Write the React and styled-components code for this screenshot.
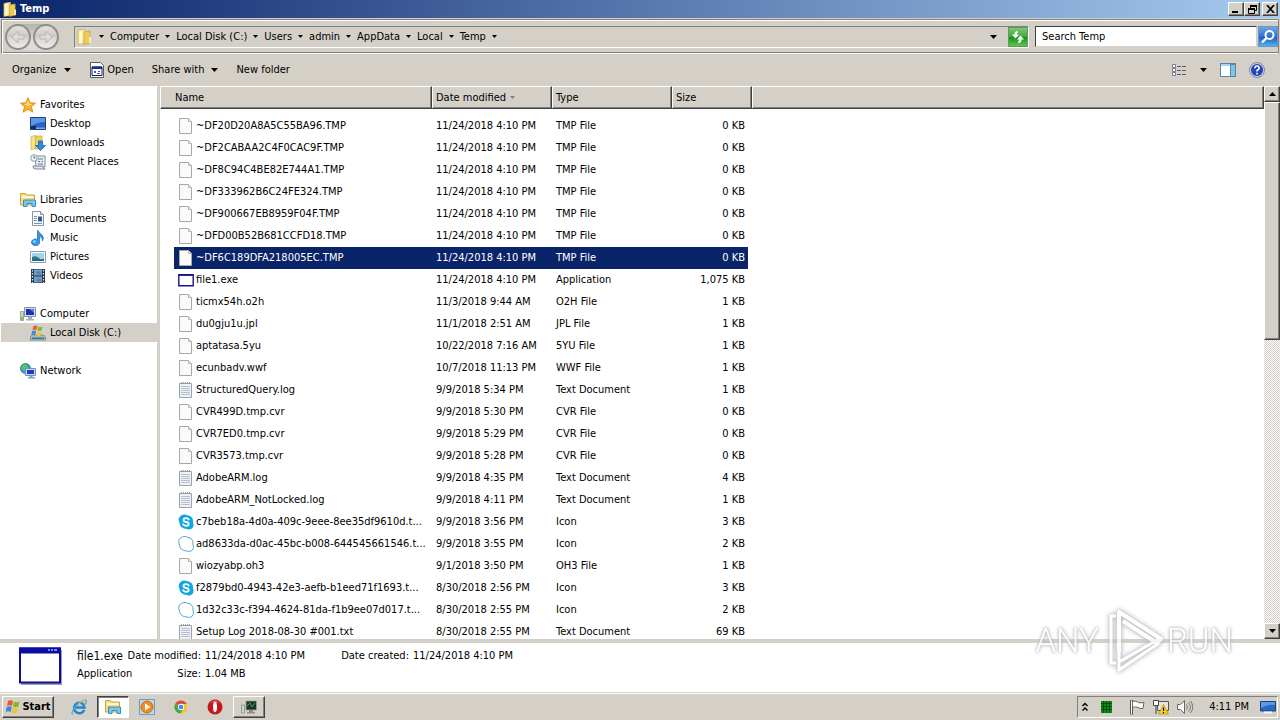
import React, { useState } from 'react';
import styled, { createGlobalStyle } from 'styled-components';

const GlobalStyle = createGlobalStyle`
  * { box-sizing: border-box; }
  body {
    margin: 0;
    overflow: hidden;
    font: 11px/18px "DejaVu Sans Condensed", "DejaVu Sans", sans-serif;
    color: #000;
  }
  button, input {
    font: inherit;
    color: inherit;
    padding: 0;
    border: 0;
    background: none;
  }
  svg { display: block; flex: none; }
`;

const Desktop = styled.div`
  position: relative;
  display: flex;
  flex-direction: column;
  height: 100vh;
  background: #d4d0c8;
`;

/* title bar */

const TitleBar = styled.header`
  display: flex;
  align-items: center;
  gap: 3px;
  height: 18px;
  padding: 0 2px;
  background: linear-gradient(to right, #0a246a, #a6caf0);
`;

const Title = styled.h1`
  flex: 1;
  margin: 0;
  font-size: 11px;
  line-height: 18px;
  color: #fff;
`;

const WindowButtons = styled.div`
  display: flex;
  button:last-child { margin-left: 2px; }
`;

const RaisedButton = styled.button`
  display: flex;
  align-items: center;
  justify-content: center;
  width: 16px;
  height: 14px;
  background: #d4d0c8;
  border: 1px solid;
  border-color: #fff #404040 #404040 #fff;
  box-shadow: inset -1px -1px 0 #808080;
`;

/* address row */

const AddressBand = styled.div`
  display: flex;
  align-items: center;
  gap: 6px;
  height: 35px;
  margin: 1px 1px 0;
  padding: 0 0 0 3px;
  border: 1px solid #808080;
  border-bottom-color: #fff;
  box-shadow: inset 1px 1px 0 #fff, inset 0 -1px 0 #808080;
`;

const NavButtons = styled.div`
  display: flex;
  gap: 2px;
  margin-right: 9px;
  border-radius: 13px;
  background: linear-gradient(#b4b2ae, #dedcd8 60%);
`;

const RoundButton = styled.button`
  display: flex;
  align-items: center;
  justify-content: center;
  width: 26px;
  height: 26px;
  border: 2px solid #908e8a;
  border-radius: 50%;
  background: linear-gradient(#e4e3e0, #c9c7c3 50%, #d6d4d0 52%, #eeedea);
`;

const AddressBox = styled.div`
  flex: 1;
  display: flex;
  align-items: center;
  height: 22px;
  padding-left: 1px;
  border: 1px solid;
  border-color: #808080 #fff #fff #808080;
`;

const Crumbs = styled.nav`
  flex: 1;
  display: flex;
  align-items: center;
  gap: 6px;
  padding-left: 7px;
  a { color: inherit; text-decoration: none; }
`;

const RefreshButton = styled.button`
  display: flex;
  align-items: center;
  justify-content: center;
  width: 20px;
  height: 20px;
  margin-left: 11px;
  border: 1px solid #5f9b5a;
  background: linear-gradient(#7cc678, #3fa83a 50%, #1c8f19 52%, #5cc653);
`;

const SearchBox = styled.form`
  display: flex;
  gap: 1px;
  width: 243px;
`;

const SearchInput = styled.input`
  flex: 1;
  min-width: 0;
  height: 21px;
  padding-left: 6px;
  background: #fff;
  border: 1px solid;
  border-color: #404040 #d4d0c8 #d4d0c8 #404040;
  outline: none;
`;

const SearchButton = styled.button`
  display: flex;
  align-items: center;
  justify-content: center;
  width: 20px;
  height: 21px;
  border: 1px solid #6f95c4;
  background: linear-gradient(#6fa6e6, #2f6fd0 50%, #1c59c2 52%, #4bb4ee);
`;

/* command bar */

const CommandBar = styled.div`
  display: flex;
  align-items: center;
  justify-content: space-between;
  height: 32px;
  padding: 0 15px 0 12px;
`;

const Commands = styled.div`
  display: flex;
  align-items: center;
  gap: ${props => props.$gap}px;
`;

const Command = styled.button`
  display: flex;
  align-items: center;
  gap: ${props => props.$gap || 8}px;
`;

/* panes */

const Main = styled.main`
  flex: 1;
  display: flex;
  min-height: 0;
`;

const Sidebar = styled.nav`
  width: 160px;
  padding-top: 9px;
  padding-left: 1px;
  background: #fff;
  border-right: 3px solid #d4d0c8;
`;

const Group = styled.div`
  margin-bottom: 19px;
`;

const SideLink = styled.a`
  display: flex;
  align-items: center;
  gap: 4px;
  height: 19px;
  padding-left: ${props => props.$child ? 29 : 19}px;
  background: ${props => props.$selected ? '#d4d0c8' : 'transparent'};
  color: inherit;
  text-decoration: none;
`;

const FilePane = styled.section`
  flex: 1;
  min-width: 0;
  overflow: hidden;
  background: #fff;
`;

const FileTable = styled.table`
  display: block;
  thead, tbody { display: block; }
`;

const HeadRow = styled.tr`
  display: grid;
  grid-template-columns: 272px 120px 120px 80px 1fr;
  height: 23px;
  margin-bottom: 6px;
  background: #d4d0c8;
`;

const HeadCell = styled.th`
  display: flex;
  align-items: center;
  gap: 4px;
  padding: 0 0 0 ${props => props.$first ? 14 : 4}px;
  font-weight: normal;
  border: 1px solid;
  border-color: #fff #404040 #404040 #fff;
  border-left-width: ${props => props.$first ? 1 : 0}px;
  box-shadow: inset ${props => props.$first ? 0 : 1}px 0 0 #fff, inset -1px -1px 0 #808080;
`;

const FileRow = styled.tr`
  display: grid;
  grid-template-columns: 258px 120px 120px 76px;
  width: 574px;
  height: 22px;
  margin-left: 14px;
  line-height: 22px;
  background: ${props => props.$selected ? '#0a246a' : 'transparent'};
  color: ${props => props.$selected ? '#fff' : '#000'};
`;

const Cell = styled.td`
  padding: 0 3px 0 4px;
  text-align: ${props => props.$right ? 'right' : 'left'};
  white-space: nowrap;
`;

const NameCell = styled(Cell)`
  display: flex;
  align-items: center;
  gap: 2px;
`;

const ScrollBar = styled.div`
  display: flex;
  flex-direction: column;
  width: 16px;
  background: repeating-conic-gradient(#fff 0 25%, #d4d0c8 0 50%) 0 0 / 2px 2px;
`;

const ScrollButton = styled(RaisedButton)`
  height: 16px;
  flex: none;
`;

const Thumb = styled(ScrollButton)`
  height: 43%;
  margin-bottom: auto;
`;

/* details pane */

const Details = styled.section`
  display: flex;
  height: 53px;
  padding: 4px 0 0 18px;
  gap: 15px;
  border-top: 4px solid #d4d0c8;
  background: #fff;
`;

const Facts = styled.dl`
  display: grid;
  grid-template-columns: 50px 78px 132px 76px auto;
  grid-auto-rows: 18px;
  margin: 0;
  white-space: nowrap;
  dt, dd { margin: 0; }
  dt { text-align: right; padding-right: 4px; }
`;

const FileName = styled.dd`
  font-size: 12px;
`;

/* taskbar */

const Taskbar = styled.footer`
  display: flex;
  align-items: center;
  height: 28px;
  padding: 2px 2px 0;
  box-shadow: inset 0 1px 0 #d4d0c8, inset 0 2px 0 #fff;
`;

const StartButton = styled(RaisedButton)`
  width: 52px;
  height: 22px;
  gap: 1px;
  margin-right: 9px;
  font-weight: bold;
`;

const Apps = styled.div`
  display: flex;
  flex: 1;
  gap: 2px;
`;

const AppButton = styled.button`
  display: flex;
  align-items: center;
  justify-content: center;
  width: 32px;
  height: 22px;
  border: 1px solid transparent;
  ${props => props.$state === 'active' && `
    background: #fff;
    border-color: #404040 #fff #fff #404040;
    box-shadow: inset 1px 1px 0 #808080;
  `}
  ${props => props.$state === 'open' && `
    border-color: #fff #404040 #404040 #fff;
    box-shadow: inset -1px -1px 0 #808080;
  `}
`;

const Tray = styled.div`
  display: flex;
  align-items: center;
  gap: 8px;
  height: 22px;
  padding: 0 1px 0 3px;
  border: 1px solid;
  border-color: #808080 #fff #fff #808080;
`;

const TrayItem = styled.button`
  display: flex;
  margin: 0 ${props => props.$after || 0}px 0 0;
`;

const Clock = styled.time`
  margin: 0 3px 0 8px;
`;

const Watermark = styled.div`
  position: absolute;
  right: 47px;
  bottom: 46px;
  display: flex;
  align-items: center;
  gap: 4px;
  font: 300 33px/66px Roboto, sans-serif;
  color: #fff;
  opacity: 0.8;
  text-shadow: 0 0 3px #aaa, 0 0 3px #bbb, 0 0 5px #ccc;
  pointer-events: none;
  svg { filter: drop-shadow(0 0 2px #aaa) drop-shadow(0 0 2px #ccc); }
`;

/* icons */

const Caret = ({ w = 7, up, fill = '#000' }) => {
  const h = (w + 1) / 2;
  return (
    <svg width={w} height={h} viewBox={`0 0 ${w} ${h}`}>
      <path d={up ? `M0 ${h}H${w}L${w / 2} 0Z` : `M0 0H${w}L${w / 2} ${h}Z`} fill={fill} />
    </svg>
  );
};

const Svg = ({ children, s = 16 }) => <svg width={s} height={s} viewBox="0 0 16 16">{children}</svg>;

const FolderUpright = ({ s }) => (
  <Svg s={s}>
    <path d="M2 1.500L9 0V14.500L2 15.500Z" fill="#f7e695" stroke="#c9a83c" strokeWidth=".6" />
    <path d="M8 3L14 2V14L8 15.500Z" fill="#eccb58" stroke="#c09a32" strokeWidth=".6" />
    <path d="M3.500 2L6 1.600V14L3.500 14.500Z" fill="#fff8cf" />
    <path d="M13 8h2v6h-2z" fill="#f9ecaf" />
  </Svg>
);

const NavArrow = ({ back }) => (
  <svg width="16" height="16" viewBox="0 0 16 16">
    <path d={back ? 'M8 2L2 8l6 6v-4h6V6H8z' : 'M8 2l6 6-6 6v-4H2V6h6z'} fill="#dddbd7" stroke="#b8b6b2" strokeWidth="1" />
  </svg>
);

const Star = () => (
  <Svg>
    <path d="M8 .8l2.100 5 5.400.4-4.100 3.500 1.400 5.400L8 12.200l-4.800 2.900 1.400-5.400L.5 6.200l5.400-.4z" fill="#fbb12a" stroke="#e08410" strokeWidth=".9" />
    <path d="M8 3l1.300 3.700 3.600.3L8 9 4 7l2.700-.3z" fill="#ffe27a" />
  </Svg>
);

const DesktopIcon = () => (
  <Svg>
    <path d="M.5 1.500h15v12H.5z" fill="#2a62c8" stroke="#1e3f86" />
    <path d="M1 2h14v4Q8 6 1 10z" fill="#5d97e6" />
    <path d="M1 10h5v3H1z" fill="#1b2f55" />
    <path d="M6 11.500h9V13H6z" fill="#7aa9dd" />
  </Svg>
);

const Downloads = () => (
  <Svg>
    <path d="M1 1.500l5-1v13l-5 1z" fill="#f7e58b" stroke="#d0ad43" strokeWidth=".7" />
    <path d="M6 1h6v13H5z" fill="#f0d266" stroke="#c9a23a" strokeWidth=".7" />
    <path d="M8.500 6h4v4.500h3l-5 5-5-5h3z" fill="#2e8be0" stroke="#1a5fae" strokeWidth=".8" />
  </Svg>
);

const Recent = () => (
  <Svg>
    <path d="M5 2h10v11H6z" fill="#e8edf2" stroke="#7d8a99" />
    <path d="M8 5h5M8 7.500h2M11.500 7.500H13M8 10h5" stroke="#5c7fa8" />
    <path d="M3 12h10q0 3 2 3H5q-2 0-2-3z" fill="#dde4ea" stroke="#7d8a99" />
    <circle cx="4" cy="4" r="3.300" fill="#f4f7fa" stroke="#8798aa" />
    <path d="M4 2v2h1.500" stroke="#345" fill="none" strokeWidth=".8" />
  </Svg>
);

const LibrariesIcon = () => (
  <Svg>
    <path d="M.5 1.500h5l1 1.500h8v10H.5z" fill="#f6df83" stroke="#c8a441" />
    <path d="M1.500 4h12v2h-12z" fill="#fff6c8" />
    <path d="M3.500 14.500V8h12v6.500h-3.500v-3h-5v3z" fill="#7ec5ea" stroke="#3a8dbf" />
  </Svg>
);

const DocumentsIcon = () => (
  <Svg>
    <path d="M2.500.5h8l3 3v11h-11z" fill="#fdfdfe" stroke="#8593a5" />
    <path d="M10.500.5v3h3" fill="#d7e0ea" stroke="#8593a5" />
    <path d="M4 5.500h3M4 7.500h3M4 9.500h3M4 12.500h8" stroke="#7390b5" />
    <path d="M8 5.500h4v5H8z" fill="#2f5d9c" />
  </Svg>
);

const MusicIcon = () => (
  <Svg>
    <path d="M8 .5q1 2.500 4 4.500 2.500 3 .5 6 .5-3.500-3-4.500V12a4 3.400 0 1 1-2-2.600V.5z" fill="#2d9be6" stroke="#1668b0" strokeWidth=".7" />
    <circle cx="4.500" cy="11.500" r="1.300" fill="#9ad6fb" />
  </Svg>
);

const PicturesIcon = () => (
  <Svg>
    <path d="M.5 2.500h15v11H.5z" fill="#fff" stroke="#8a9bac" />
    <path d="M2 4h12v8H2z" fill="#9fd4f2" />
    <path d="M2 8q4-2 7 1t5 0v3H2z" fill="#2d7b72" />
    <path d="M2 10.500h12V12H2z" fill="#2a5f9e" />
  </Svg>
);

const VideosIcon = () => (
  <Svg>
    <path d="M1 1h14v14H1z" fill="#2b3540" />
    <path d="M4 1.500h8v6H4z" fill="#5aa8dc" />
    <path d="M4 8.500h8v6H4z" fill="#5aa8dc" />
    <path d="M6 4l3-1 2 2v1.500H7zM6 12l3-2 2 2v1.500H7z" fill="#a8463a" opacity=".5" />
    <path d="M2.500 2v13M13.500 2v13" stroke="#e6ebef" strokeWidth="1.200" strokeDasharray="1.500 1.500" />
  </Svg>
);

const ComputerIcon = () => (
  <Svg>
    <path d="M.5 5.500h3v9h-3z" fill="#cdd5d0" stroke="#8a948e" strokeWidth=".8" />
    <path d="M1 11h2v3H1z" fill="#7fc24c" />
    <path d="M4.500 1.500h11v9h-11z" fill="#d6dbe6" stroke="#8b93a8" />
    <path d="M6 3h8v6H6z" fill="#1c2fb0" />
    <path d="M9 3h5v4z" fill="#5b78e8" />
    <path d="M8 11h4v2h2v1.500H6V13h2z" fill="#a8aebb" />
  </Svg>
);

const DiskIcon = () => (
  <Svg>
    <path d="M2 10h11l2.500 2v3H.5v-3z" fill="#a9bcc3" stroke="#6d8088" strokeWidth=".8" />
    <path d="M2 12.500h12V14H2z" fill="#2f7f8a" />
    <path d="M3.500 1q2-1 4 0L6.500 5q-2-1-4 0z" fill="#ea5a22" />
    <path d="M8.500 1.500q2 1 4 0l-1 4q-2 1-4 0z" fill="#7fba2c" />
    <path d="M2.200 6q2-1 4 0l-1 4q-2-1-4 0z" fill="#3d86dd" />
    <path d="M7.200 6.500q2 1 4 0l-1 4q-2 1-4 0z" fill="#f8c22c" />
  </Svg>
);

const NetworkIcon = () => (
  <Svg>
    <circle cx="5.500" cy="5.500" r="5" fill="#3ba5c9" stroke="#1c6f94" strokeWidth=".8" />
    <path d="M2 2.500Q6 0 7 2.500T3 7Q1 6 2 2.500zM4 8q3-1 3 2z" fill="#5fc05a" />
    <path d="M5.500 5.500h10v7h-10z" fill="#cbd6ee" stroke="#7c8fb8" />
    <path d="M7 7h7v4H7z" fill="#1a3ec4" />
    <path d="M9.500 13h3v1H15v1.500H8V14h1.500z" fill="#8aa0c4" />
  </Svg>
);

const BlankFile = () => (
  <Svg>
    <path d="M1.500.5h9l3 3v12h-12z" fill="#fafafa" stroke="#a8a8a8" />
    <path d="M10.500.5v3h3" fill="#e4e4e4" stroke="#b8b8b8" />
  </Svg>
);

const TextFile = () => (
  <Svg>
    <path d="M1.500 1.500h12v14h-12z" fill="#eef2f6" stroke="#9aa3ac" />
    <path d="M3 4.500h9M3 6.500h9M3 8.500h9M3 10.500h9M3 12.500h9" stroke="#b4c1ce" />
    <path d="M3 1h10" stroke="#8a8a8a" strokeWidth="1.600" strokeDasharray="1 1" />
  </Svg>
);

const ExeFile = () => (
  <Svg>
    <path d="M.8 2.800h14.400v11H.8z" fill="#fff" stroke="#14148c" strokeWidth="1.400" />
    <path d="M1 3h14" stroke="#14148c" strokeWidth="1.600" />
  </Svg>
);

const blob = 'M4.500.8Q7-.2 9.500 1.200 15.500 2 15 8.500 16.500 12 14 14.500 11.500 16.300 9 15 2 15 1.200 8-.8 3.500 4.500.8z';

const SkypeIcon = () => (
  <Svg>
    <path d={blob} fill="#12a5e4" />
    <path d="M10.800 5.600Q9.800 4.200 8 4.200 5.500 4.200 5.500 6T8 8t2.700 2T8 11.800Q5.800 11.800 5 10.200" fill="none" stroke="#fff" strokeWidth="1.800" strokeLinecap="round" />
  </Svg>
);

const SkypeOutline = () => (
  <Svg><path d={blob} fill="#fff" stroke="#3f9fd0" strokeWidth=".9" /></Svg>
);

const OpenIcon = () => (
  <Svg>
    <path d="M1.500.5h10l3 3v12h-13z" fill="#fff" stroke="#5a5a5a" />
    <path d="M3 5h10v8.500H3z" fill="#fff" stroke="#14145c" />
    <path d="M3 4.500h10v2.500H3z" fill="#1b2a9c" />
    <path d="M5 9h2v2H5zM9 9h2v1H9zM8 11h3v1H8z" fill="#2a5fb8" />
  </Svg>
);

const ViewIcon = () => (
  <Svg>
    <path d="M1.500 2.500h3v3h-3zM1.500 6.500h3v3h-3zM1.500 10.500h3v3h-3z" fill="#fff" stroke="#777c86" />
    <path d="M6 4.500h4M11 4.500h4M6 8.500h4M11 8.500h4M6 12.500h4M11 12.500h4" stroke="#5b6068" />
  </Svg>
);

const PreviewIcon = () => (
  <Svg>
    <path d="M.5 1.500h15v13H.5z" fill="#fff" stroke="#4e86a8" />
    <path d="M1 2h14v2H1z" fill="#a9d3e8" />
    <path d="M10.500 2.500h5v12h-5z" fill="#86c3e0" stroke="#4e86a8" />
  </Svg>
);

const HelpIcon = () => (
  <Svg>
    <circle cx="8" cy="8" r="7.500" fill="#c7cfe4" stroke="#7d88a8" />
    <circle cx="8" cy="8" r="6" fill="#2447b4" />
    <path d="M5.800 6.200Q6 4 8 4t2.200 2Q10.200 7.200 8 8.500v1" fill="none" stroke="#fff" strokeWidth="1.600" />
    <path d="M7.200 10.800h1.600v1.600H7.200z" fill="#fff" />
  </Svg>
);

const RefreshIcon = () => (
  <Svg>
    <path d="M7.500 2Q4.500 2 4.500 5.500H2l3.500 4 3.500-4H6.800Q6.800 4 8 3.500z" fill="#fff" />
    <path d="M8.500 14q3 0 3-3.500H14l-3.500-4-3.500 4h2.200Q9.200 12 8 12.500z" fill="#fff" />
  </Svg>
);

const MagnifierIcon = () => (
  <Svg>
    <circle cx="9.500" cy="6" r="4" fill="none" stroke="#fff" strokeWidth="2" />
    <path d="M6.500 9L2 13.500" stroke="#fff" strokeWidth="2.400" />
  </Svg>
);

const BigWindow = () => (
  <svg width="44" height="40" viewBox="0 0 44 40">
    <path d="M3 3h41v35H3z" fill="#9a9ab4" />
    <path d="M2 1.500h40v34H2z" fill="#fff" stroke="#10108c" strokeWidth="2" />
    <path d="M1 .5h42v6H1z" fill="#0c0ca4" />
    <path d="M30 3h2M33 3h2M36 3h3" stroke="#7fc4f2" strokeWidth="1.500" />
  </svg>
);

const WindowsFlag = () => (
  <Svg>
    <path d="M3 2q2.500-1.500 5 0L7 7Q4.500 5.500 2 7z" fill="#ea5a22" />
    <path d="M9 2.500q2.500 1.500 5.500 0l-1 5q-3 1.500-5.500 0z" fill="#7fba2c" />
    <path d="M1.700 8q2.500-1.500 5 0l-1 5Q3.200 11.500.7 13z" fill="#3d86dd" />
    <path d="M7.800 8.500q2.500 1.500 5.500 0l-1 5q-3 1.500-5.500 0z" fill="#f8c22c" />
  </Svg>
);

const IeIcon = () => (
  <Svg>
    <path d="M13.300 10.800A5.300 5.300 0 1 1 13.600 8.500H4" fill="none" stroke="#2383cf" strokeWidth="2.400" />
    <path d="M2 15.300Q-1 14 5 7.500T14.500 1Q16.500 2 14 5.500" fill="none" stroke="#4fa8e4" strokeWidth="1.300" />
    <path d="M7 5.500Q12 .8 14.500 1.200" fill="none" stroke="#e5b82c" strokeWidth="1.300" />
  </Svg>
);

const PlayIcon = () => (
  <Svg>
    <path d="M.5.500h15v15H.5z" fill="#b9dcf3" stroke="#5d9fd0" />
    <circle cx="8" cy="8" r="6" fill="#f58a1c" stroke="#d46a08" />
    <path d="M6 4.500v7L11.500 8z" fill="#fff" />
  </Svg>
);

const ChromeIcon = () => (
  <Svg s={14}>
    <circle cx="8" cy="8" r="7.500" fill="#f4c430" />
    <path d="M8 8L1.500 4.200A7.500 7.500 0 0 1 14.500 4.500H8z" fill="#dd4b3e" />
    <path d="M8 8L1.500 4.200A7.500 7.500 0 0 0 7.500 15.500L11 9.500z" fill="#3fa652" />
    <circle cx="8" cy="8" r="3.600" fill="#fff" />
    <circle cx="8" cy="8" r="2.700" fill="#4a86e8" />
  </Svg>
);

const OperaIcon = () => (
  <Svg>
    <circle cx="8" cy="8" r="7.500" fill="#c8161c" />
    <path d="M3 4q5-5 10 0-5-2-10 0z" fill="#ef6a6c" />
    <ellipse cx="8" cy="8" rx="2" ry="5.200" fill="#fff" />
  </Svg>
);

const MonitorIcon = () => (
  <Svg>
    <path d="M5 2h10.500v9H5z" fill="#20352a" stroke="#9aa3a0" strokeWidth=".8" />
    <path d="M6 7l3-3 2 4 3-4" fill="none" stroke="#2fa84a" />
    <path d="M8 11h4v2h2v1.500H6V13h2z" fill="#8b908e" />
    <path d="M.5 6h3v8h-3z" fill="#cfd4d0" stroke="#858a86" strokeWidth=".8" />
  </Svg>
);

const ChevronsUp = () => (
  <svg width="8" height="10" viewBox="0 0 8 10">
    <path d="M1.500 4L4 1.500 6.500 4M1.500 8.500L4 6l2.500 2.500" fill="none" stroke="#000" strokeWidth="1.400" />
  </svg>
);

const GreenGrid = () => (
  <svg width="12" height="12" viewBox="0 0 12 12">
    <path d="M0 0h11v12H0z" fill="#0b8a14" />
    <path d="M0 2.500h11M0 5.500h11M0 8.500h11M2.500 0v12M5.500 0v12M8.500 0v12" stroke="#04460a" strokeWidth=".8" />
  </svg>
);

const FlagIcon = () => (
  <Svg>
    <path d="M2.500 1v14.500" stroke="#555" strokeWidth="3" />
    <path d="M3.500 2.500q3-1 5 .5t6.500.5l-1 6q-3 .5-5-1t-5.500 0z" fill="#fff" stroke="#666" />
    <path d="M2.500 1.500V15" stroke="#fff" />
  </Svg>
);

const NetTray = () => (
  <Svg>
    <path d="M4.500 2.500h11v9h-11z" fill="#e6e4de" stroke="#555" />
    <path d="M.5 1.500h5v5h-5zM3 7v8" fill="#fff" stroke="#444" />
    <path d="M10.500 5.500l5 9.500h-10z" fill="#ffd21e" stroke="#b08d00" strokeWidth=".7" />
    <path d="M10.500 8.500v3.500M10.500 13v1.200" stroke="#000" strokeWidth="1.200" />
  </Svg>
);

const Speaker = () => (
  <Svg>
    <path d="M.5 5.500h3L7.500 1.500v13l-4-4h-3z" fill="#fff" stroke="#666" />
    <path d="M9.500 5.500q2 2.500 0 5M11.500 3.500q4 4.500 0 9M13.500 2q4.500 6 0 12" fill="none" stroke="#777" />
  </Svg>
);

const ShowDesktop = () => (
  <Svg>
    <path d="M.5 2.500h15v9.500H.5z" fill="#2a68c8" stroke="#1c3e7c" />
    <path d="M1 3h14v3Q8 5 1 9z" fill="#5c9be8" />
    <path d="M4 13.500h8" stroke="#f4f4f4" strokeWidth="2" />
  </Svg>
);

/* data */

const crumbs = ['Computer', 'Local Disk (C:)', 'Users', 'admin', 'AppData', 'Local', 'Temp'];

const places = [
  [['Favorites', Star], ['Desktop', DesktopIcon], ['Downloads', Downloads], ['Recent Places', Recent]],
  [['Libraries', LibrariesIcon], ['Documents', DocumentsIcon], ['Music', MusicIcon], ['Pictures', PicturesIcon], ['Videos', VideosIcon]],
  [['Computer', ComputerIcon], ['Local Disk (C:)', DiskIcon]],
  [['Network', NetworkIcon]],
];

const files = [
  ['~DF20D20A8A5C55BA96.TMP', '11/24/2018 4:10 PM', 'TMP File', '0 KB'],
  ['~DF2CABAA2C4F0CAC9F.TMP', '11/24/2018 4:10 PM', 'TMP File', '0 KB'],
  ['~DF8C94C4BE82E744A1.TMP', '11/24/2018 4:10 PM', 'TMP File', '0 KB'],
  ['~DF333962B6C24FE324.TMP', '11/24/2018 4:10 PM', 'TMP File', '0 KB'],
  ['~DF900667EB8959F04F.TMP', '11/24/2018 4:10 PM', 'TMP File', '0 KB'],
  ['~DFD00B52B681CCFD18.TMP', '11/24/2018 4:10 PM', 'TMP File', '0 KB'],
  ['~DF6C189DFA218005EC.TMP', '11/24/2018 4:10 PM', 'TMP File', '0 KB'],
  ['file1.exe', '11/24/2018 4:10 PM', 'Application', '1,075 KB', ExeFile],
  ['ticmx54h.o2h', '11/3/2018 9:44 AM', 'O2H File', '1 KB'],
  ['du0gju1u.jpl', '11/1/2018 2:51 AM', 'JPL File', '1 KB'],
  ['aptatasa.5yu', '10/22/2018 7:16 AM', '5YU File', '1 KB'],
  ['ecunbadv.wwf', '10/7/2018 11:13 PM', 'WWF File', '1 KB'],
  ['StructuredQuery.log', '9/9/2018 5:34 PM', 'Text Document', '1 KB', TextFile],
  ['CVR499D.tmp.cvr', '9/9/2018 5:30 PM', 'CVR File', '0 KB'],
  ['CVR7ED0.tmp.cvr', '9/9/2018 5:29 PM', 'CVR File', '0 KB'],
  ['CVR3573.tmp.cvr', '9/9/2018 5:28 PM', 'CVR File', '0 KB'],
  ['AdobeARM.log', '9/9/2018 4:35 PM', 'Text Document', '4 KB', TextFile],
  ['AdobeARM_NotLocked.log', '9/9/2018 4:11 PM', 'Text Document', '1 KB', TextFile],
  ['c7beb18a-4d0a-409c-9eee-8ee35df9610d.t...', '9/9/2018 3:56 PM', 'Icon', '3 KB', SkypeIcon],
  ['ad8633da-d0ac-45bc-b008-644545661546.t...', '9/9/2018 3:55 PM', 'Icon', '2 KB', SkypeOutline],
  ['wiozyabp.oh3', '9/1/2018 3:50 PM', 'OH3 File', '1 KB'],
  ['f2879bd0-4943-42e3-aefb-b1eed71f1693.t...', '8/30/2018 2:56 PM', 'Icon', '3 KB', SkypeIcon],
  ['1d32c33c-f394-4624-81da-f1b9ee07d017.t...', '8/30/2018 2:55 PM', 'Icon', '2 KB', SkypeOutline],
  ['Setup Log 2018-08-30 #001.txt', '8/30/2018 2:55 PM', 'Text Document', '69 KB', TextFile],
];

export default function App() {
  const [selected, setSelected] = useState(6);
  const [query, setQuery] = useState('Search Temp');

  return (
    <Desktop>
      <GlobalStyle />
      <TitleBar>
        <FolderUpright s={15} />
        <Title>Temp</Title>
        <WindowButtons>
          <RaisedButton aria-label="Minimize">
            <svg width="8" height="8"><path d="M0 6h6v2H0z" /></svg>
          </RaisedButton>
          <RaisedButton aria-label="Restore">
            <svg width="9" height="9">
              <path d="M2.500 3V.5h6v5H6.500M.5 3.500h6v5h-6z" fill="none" stroke="#000" />
              <path d="M2 1h7M0 4h7" stroke="#000" strokeWidth="2" />
            </svg>
          </RaisedButton>
          <RaisedButton aria-label="Close">
            <svg width="9" height="8"><path d="M1 0l7 8M8 0L1 8" stroke="#000" strokeWidth="1.700" /></svg>
          </RaisedButton>
        </WindowButtons>
      </TitleBar>

      <AddressBand>
        <NavButtons>
          <RoundButton aria-label="Back"><NavArrow back /></RoundButton>
          <RoundButton aria-label="Forward"><NavArrow /></RoundButton>
        </NavButtons>
        <AddressBox>
          <FolderUpright />
          <Crumbs>
            <Caret w={5} />
            {crumbs.map(c => (
              <React.Fragment key={c}>
                <a href="#path">{c}</a>
                <Caret w={5} />
              </React.Fragment>
            ))}
          </Crumbs>
          <Caret />
          <RefreshButton aria-label="Refresh"><RefreshIcon /></RefreshButton>
        </AddressBox>
        <SearchBox onSubmit={(e) => e.preventDefault()}>
          <SearchInput aria-label="Search" value={query} onChange={(e) => setQuery(e.target.value)} />
          <SearchButton aria-label="Go"><MagnifierIcon /></SearchButton>
        </SearchBox>
      </AddressBand>

      <CommandBar>
        <Commands $gap={18}>
          <Command>Organize <Caret /></Command>
          <Command $gap={2}><OpenIcon /> Open</Command>
          <Command $gap={7}>Share with <Caret /></Command>
          <Command>New folder</Command>
        </Commands>
        <Commands $gap={13}>
          <Command $gap={13} aria-label="Change view"><ViewIcon /><Caret /></Command>
          <Command aria-label="Preview pane"><PreviewIcon /></Command>
          <Command aria-label="Help"><HelpIcon /></Command>
        </Commands>
      </CommandBar>

      <Main>
        <Sidebar>
          {places.map((group, g) => (
            <Group key={g}>
              {group.map(([name, Icon], i) => (
                <SideLink href="#place" key={name} $child={i > 0} $selected={name === 'Local Disk (C:)'}>
                  <Icon />{name}
                </SideLink>
              ))}
            </Group>
          ))}
        </Sidebar>
        <FilePane>
          <FileTable>
            <thead>
              <HeadRow>
                <HeadCell $first>Name</HeadCell>
                <HeadCell>Date modified <Caret w={5} fill="#808080" /></HeadCell>
                <HeadCell>Type</HeadCell>
                <HeadCell>Size</HeadCell>
                <HeadCell as="td" />
              </HeadRow>
            </thead>
            <tbody>
              {files.map(([name, date, type, size, Icon = BlankFile], i) => (
                <FileRow key={name} $selected={i === selected} onClick={() => setSelected(i)}>
                  <NameCell><Icon />{name}</NameCell>
                  <Cell>{date}</Cell>
                  <Cell>{type}</Cell>
                  <Cell $right>{size}</Cell>
                </FileRow>
              ))}
            </tbody>
          </FileTable>
        </FilePane>
        <ScrollBar>
          <ScrollButton aria-label="Scroll up"><Caret up /></ScrollButton>
          <Thumb aria-label="Scroll thumb" />
          <ScrollButton aria-label="Scroll down"><Caret /></ScrollButton>
        </ScrollBar>
      </Main>

      <Details>
        <BigWindow />
        <Facts>
          <FileName>file1.exe</FileName>
          <dt>Date modified:</dt>
          <dd>11/24/2018 4:10 PM</dd>
          <dt>Date created:</dt>
          <dd>11/24/2018 4:10 PM</dd>
          <dd>Application</dd>
          <dt>Size:</dt>
          <dd>1.04 MB</dd>
        </Facts>
      </Details>

      <Taskbar>
        <StartButton><WindowsFlag />Start</StartButton>
        <Apps>
          <AppButton aria-label="Internet Explorer"><IeIcon /></AppButton>
          <AppButton aria-label="Explorer" $state="active"><LibrariesIcon /></AppButton>
          <AppButton aria-label="Media Player"><PlayIcon /></AppButton>
          <AppButton aria-label="Chrome"><ChromeIcon /></AppButton>
          <AppButton aria-label="Opera"><OperaIcon /></AppButton>
          <AppButton aria-label="Monitor" $state="open"><MonitorIcon /></AppButton>
        </Apps>
        <Tray>
          <TrayItem aria-label="Show hidden icons" $after={4}><ChevronsUp /></TrayItem>
          <TrayItem aria-label="Activity" $after={8}><GreenGrid /></TrayItem>
          <TrayItem aria-label="Action center"><FlagIcon /></TrayItem>
          <TrayItem aria-label="Network"><NetTray /></TrayItem>
          <TrayItem aria-label="Volume"><Speaker /></TrayItem>
          <Clock>4:11 PM</Clock>
          <TrayItem aria-label="Show desktop"><ShowDesktop /></TrayItem>
        </Tray>
      </Taskbar>

      <Watermark>
        <span>ANY</span>
        <svg width="60" height="66" viewBox="0 0 60 66">
          <path d="M13 8H8v47h5" fill="none" stroke="#fff" strokeWidth="3" />
          <path d="M16 44V4l42 27-4 4-34-22" fill="none" stroke="#fff" strokeWidth="4" strokeLinejoin="round" />
          <path d="M16 44v10l40-23M16 54v8l40-27" fill="none" stroke="#fff" strokeWidth="3" strokeLinejoin="round" />
        </svg>
        <span>RUN</span>
      </Watermark>
    </Desktop>
  );
}
